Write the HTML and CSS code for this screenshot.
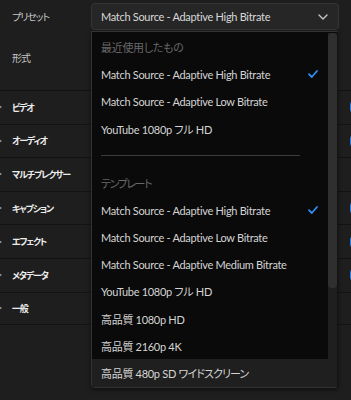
FILE: index.html
```html
<!DOCTYPE html>
<html lang="ja">
<head>
<meta charset="utf-8">
<link rel="stylesheet" href="styles.css">
</head>
<body>
<div class="panel">
  <div class="field field-preset">
    <span class="field-label">プリセット</span>
    <div class="select">
      <span class="select-value">Match Source - Adaptive High Bitrate</span>
      <svg class="select-chevron" width="10" height="6" viewBox="0 0 10 6"><path d="M1 1 L5 5 L9 1" fill="none" stroke="#c4c4c4" stroke-width="1.4" stroke-linecap="round" stroke-linejoin="round"/></svg>
    </div>
  </div>
  <div class="field field-format">
    <span class="field-label">形式</span>
  </div>
  <div class="sections">
    <div class="section"><span class="caret"></span><span class="section-label">ビデオ</span><span class="check-box"></span></div>
    <div class="section"><span class="caret"></span><span class="section-label">オーディオ</span><span class="check-box"></span></div>
    <div class="section"><span class="caret"></span><span class="section-label">マルチプレクサー</span></div>
    <div class="section"><span class="caret"></span><span class="section-label">キャプション</span><span class="check-box"></span></div>
    <div class="section"><span class="caret"></span><span class="section-label">エフェクト</span><span class="check-box"></span></div>
    <div class="section"><span class="caret"></span><span class="section-label">メタデータ</span><span class="check-box"></span></div>
    <div class="section"><span class="caret"></span><span class="section-label">一般</span></div>
  </div>

  <div class="menu">
    <ul class="menu-list">
      <li class="menu-header">最近使用したもの</li>
      <li class="menu-item selected">Match Source - Adaptive High Bitrate<svg class="tick" width="10" height="8" viewBox="0 0 10 8"><path d="M1 4.2 L3.8 7 L9 1" fill="none" stroke="#2f8df0" stroke-width="1.8" stroke-linecap="round" stroke-linejoin="round"/></svg></li>
      <li class="menu-item">Match Source - Adaptive Low Bitrate</li>
      <li class="menu-item">YouTube 1080p フル HD</li>
      <li class="menu-divider"><hr></li>
      <li class="menu-header"><span class="kana">テンプレート</span></li>
      <li class="menu-item selected">Match Source - Adaptive High Bitrate<svg class="tick" width="10" height="8" viewBox="0 0 10 8"><path d="M1 4.2 L3.8 7 L9 1" fill="none" stroke="#2f8df0" stroke-width="1.8" stroke-linecap="round" stroke-linejoin="round"/></svg></li>
      <li class="menu-item">Match Source - Adaptive Low Bitrate</li>
      <li class="menu-item">Match Source - Adaptive Medium Bitrate</li>
      <li class="menu-item">YouTube 1080p フル HD</li>
      <li class="menu-item">高品質 1080p HD</li>
      <li class="menu-item">高品質 2160p 4K</li>
      <li class="menu-item hovered">高品質 480p SD&nbsp;<span class="kana-light">ワイドスクリーン</span></li>
    </ul>
    <div class="scrollbar"><div class="thumb"></div></div>
  </div>
</div>
</body>
</html>
```

FILE: styles.css
```css
html, body {
  margin: 0;
  padding: 0;
  background: #1e1e1e;
  overflow: hidden;
}
body {
  width: 351px;
  height: 400px;
  font-family: "Lato", "Noto Sans CJK JP", sans-serif;
  font-feature-settings: "palt";
}
.panel {
  position: relative;
  display: flex;
  flex-direction: column;
  height: 400px;
}
.field {
  display: flex;
  align-items: center;
}
.field-label {
  font-family: "Noto Sans CJK JP", sans-serif;
  font-size: 10px;
  letter-spacing: -1.1px;
  color: #c6c6c6;
  padding-left: 12px;
  width: 79px;
}
.field-preset {
  height: 33px;
}
.select {
  box-sizing: border-box;
  width: 248px;
  height: 27px;
  background: #262626;
  border: 1px solid #353535;
  border-radius: 4px;
  display: flex;
  align-items: center;
  padding: 0 10px 0 9px;
}
.select-value {
  flex: 1;
  font-size: 11px;
  letter-spacing: -0.3px;
  color: #d8d8d8;
}
.select-chevron {
  display: block;
}
.field-format {
  height: 48px;
  margin-bottom: 9px;
}
.sections {
  display: flex;
  flex-direction: column;
}
.section {
  box-sizing: border-box;
  height: 33.6px;
  border-top: 1px solid #131313;
  display: flex;
  align-items: center;
}
.section:last-child {
  border-bottom: 1px solid #131313;
}
.caret {
  width: 0;
  height: 0;
  border-top: 2.5px solid transparent;
  border-bottom: 2.5px solid transparent;
  border-left: 3px solid #9a9a9a;
  margin-left: -1px;
}
.section-label {
  font-family: "Noto Sans CJK JP", sans-serif;
  font-weight: 700;
  font-size: 9px;
  letter-spacing: -1.2px;
  color: #ececec;
  margin-left: 10px;
}
.check-box {
  margin-left: auto;
  margin-right: -10.5px;
  width: 12px;
  height: 12px;
  border-radius: 4px;
  background: #2a7fe6;
}

/* dropdown menu overlay */
.menu {
  position: absolute;
  left: 91px;
  top: 31px;
  width: 247px;
  box-sizing: border-box;
  background: #0a0a0a;
  border: 1px solid #333;
  border-right-color: #141414;
  border-radius: 0 0 4px 4px;
  box-shadow: 0 2px 4px rgba(0,0,0,0.5);
  padding: 1.5px 0 0.5px;
}
.menu-list {
  list-style: none;
  margin: 0;
  padding: 0;
}
.menu-list li {
  height: 27.17px;
  display: flex;
  align-items: center;
  padding: 0 20px 0 9px;
  font-size: 11px;
  letter-spacing: -0.3px;
  color: #d4d4d4;
  white-space: nowrap;
}
.menu-list .menu-header {
  color: #686868;
}
.kana {
  letter-spacing: -1.4px;
}
.kana-light {
  letter-spacing: -0.9px;
}
.menu-list .menu-divider hr {
  flex: 0 0 199px;
  margin: 0;
  border: 0;
  border-top: 1px solid #3c3c3c;
}
.menu-item.selected .tick {
  margin-left: auto;
  margin-right: -1px;
}
.menu-item.hovered {
  background: #1f1f1f;
}
.scrollbar {
  position: absolute;
  top: 1px;
  right: 0;
  bottom: 0;
  width: 9px;
  background: #1f1f1f;
}
.thumb {
  height: 255px;
  background: #2f2f2f;
  border-radius: 4px;
}
```
